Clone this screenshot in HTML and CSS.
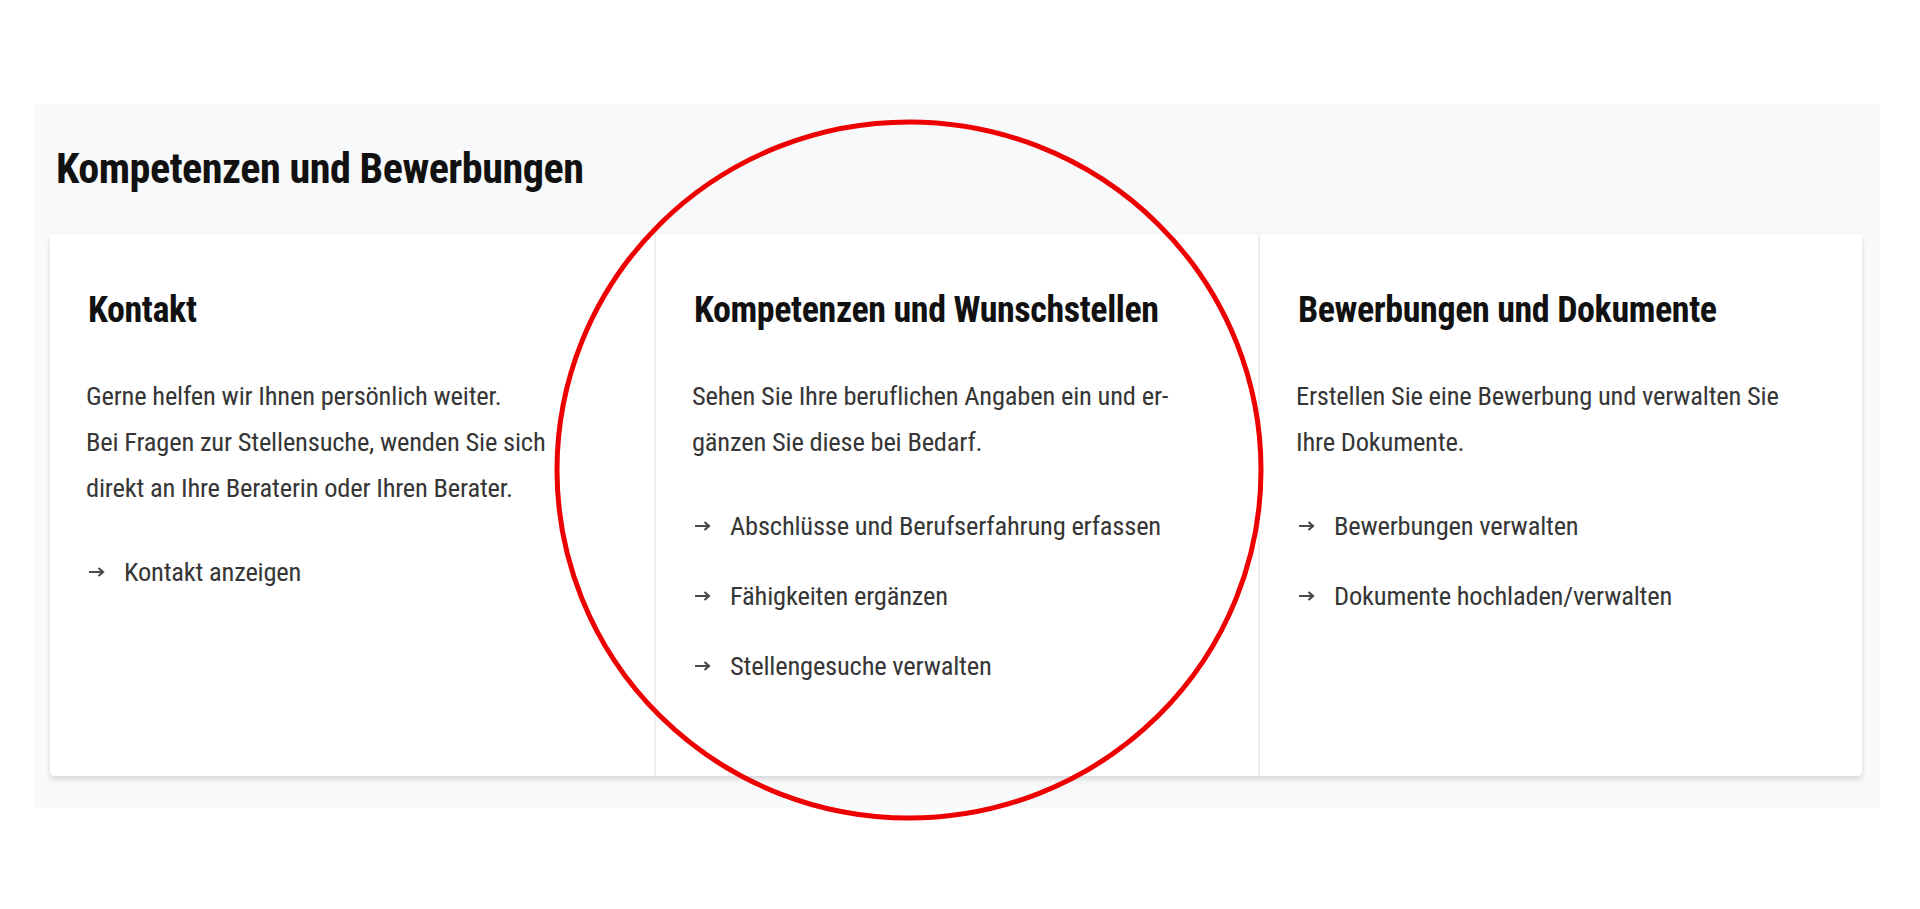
FILE: index.html
```html
<!DOCTYPE html>
<html lang="de">
<head>
<meta charset="utf-8">
<title>Kompetenzen und Bewerbungen</title>
<link rel="stylesheet" href="styles.css">
</head>
<body>
<div class="page">
  <section class="panel">
    <h1 class="panel-title">Kompetenzen und Bewerbungen</h1>
    <div class="cards">
      <div class="card">
        <h2 class="card-title">Kontakt</h2>
        <p class="card-text">Gerne helfen wir Ihnen persönlich weiter.<br>Bei Fragen zur Stellensuche, wenden Sie sich<br>direkt an Ihre Beraterin oder Ihren Berater.</p>
        <ul class="links">
          <li><span class="arrow"><svg viewBox="0 0 17 12" width="17" height="12"><path d="M1 6H15M10.5 2L15 6L10.5 10" fill="none" stroke="#4a4a4a" stroke-width="2.2"/></svg></span><span>Kontakt anzeigen</span></li>
        </ul>
      </div>
      <div class="card">
        <h2 class="card-title">Kompetenzen und Wunschstellen</h2>
        <p class="card-text">Sehen Sie Ihre beruflichen Angaben ein und er-<br>gänzen Sie diese bei Bedarf.</p>
        <ul class="links">
          <li><span class="arrow"><svg viewBox="0 0 17 12" width="17" height="12"><path d="M1 6H15M10.5 2L15 6L10.5 10" fill="none" stroke="#4a4a4a" stroke-width="2.2"/></svg></span><span>Abschlüsse und Berufserfahrung erfassen</span></li>
          <li><span class="arrow"><svg viewBox="0 0 17 12" width="17" height="12"><path d="M1 6H15M10.5 2L15 6L10.5 10" fill="none" stroke="#4a4a4a" stroke-width="2.2"/></svg></span><span>Fähigkeiten ergänzen</span></li>
          <li><span class="arrow"><svg viewBox="0 0 17 12" width="17" height="12"><path d="M1 6H15M10.5 2L15 6L10.5 10" fill="none" stroke="#4a4a4a" stroke-width="2.2"/></svg></span><span>Stellengesuche verwalten</span></li>
        </ul>
      </div>
      <div class="card">
        <h2 class="card-title">Bewerbungen und Dokumente</h2>
        <p class="card-text">Erstellen Sie eine Bewerbung und verwalten Sie<br>Ihre Dokumente.</p>
        <ul class="links">
          <li><span class="arrow"><svg viewBox="0 0 17 12" width="17" height="12"><path d="M1 6H15M10.5 2L15 6L10.5 10" fill="none" stroke="#4a4a4a" stroke-width="2.2"/></svg></span><span>Bewerbungen verwalten</span></li>
          <li><span class="arrow"><svg viewBox="0 0 17 12" width="17" height="12"><path d="M1 6H15M10.5 2L15 6L10.5 10" fill="none" stroke="#4a4a4a" stroke-width="2.2"/></svg></span><span>Dokumente hochladen/verwalten</span></li>
        </ul>
      </div>
    </div>
  </section>
  <svg class="annotation" viewBox="0 0 1920 909" width="1920" height="909" aria-hidden="true">
    <ellipse cx="909" cy="470" rx="352" ry="348" fill="none" stroke="#ee0000" stroke-width="5"/>
  </svg>
</div>
</body>
</html>
```

FILE: styles.css
```css
html, body {
  margin: 0;
  padding: 0;
  background: #ffffff;
}

body {
  font-family: "Roboto Condensed", Roboto, "Liberation Sans", sans-serif;
  font-stretch: condensed;
  color: #333333;
}

.page {
  position: relative;
  width: 1920px;
  height: 909px;
  padding: 104px 40px 0 34px;
  box-sizing: border-box;
  overflow: hidden;
}

.panel {
  background: #f8f9fa;
  padding: 41px 18px 32px 16px;
}

.panel-title {
  margin: 0 0 41px 6px;
  font-size: 42.2px;
  line-height: 48px;
  font-weight: 700;
  color: #111111;
  letter-spacing: -0.5px;
}

.cards {
  display: grid;
  grid-template-columns: repeat(3, 1fr);
  height: 542px;
  background: #ffffff;
  border-radius: 4px;
  box-shadow: 0 4px 5px rgba(0, 0, 0, 0.11), 0 0 3px rgba(0, 0, 0, 0.06);
}

.card {
  padding: 56px 30px 0 38px;
}

.card + .card {
  border-left: 2px solid #eceef0;
}

.card-title {
  margin: 0 0 43px 0;
  font-size: 36px;
  line-height: 40px;
  font-weight: 700;
  color: #111111;
  letter-spacing: -0.4px;
}

.card-text {
  margin: 0 0 38px -2px;
  font-size: 26.5px;
  line-height: 46px;
  color: #363636;
  letter-spacing: -0.2px;
}

.links {
  list-style: none;
  margin: 0;
  padding: 0;
  display: flex;
  flex-direction: column;
  gap: 24px;
}

.links li {
  display: flex;
  align-items: center;
  gap: 19px;
  font-size: 26.5px;
  line-height: 46px;
  color: #363636;
  letter-spacing: -0.2px;
}

.arrow {
  display: flex;
  align-items: center;
  width: 17px;
}

.annotation {
  position: absolute;
  left: 0;
  top: 0;
  pointer-events: none;
}
```
